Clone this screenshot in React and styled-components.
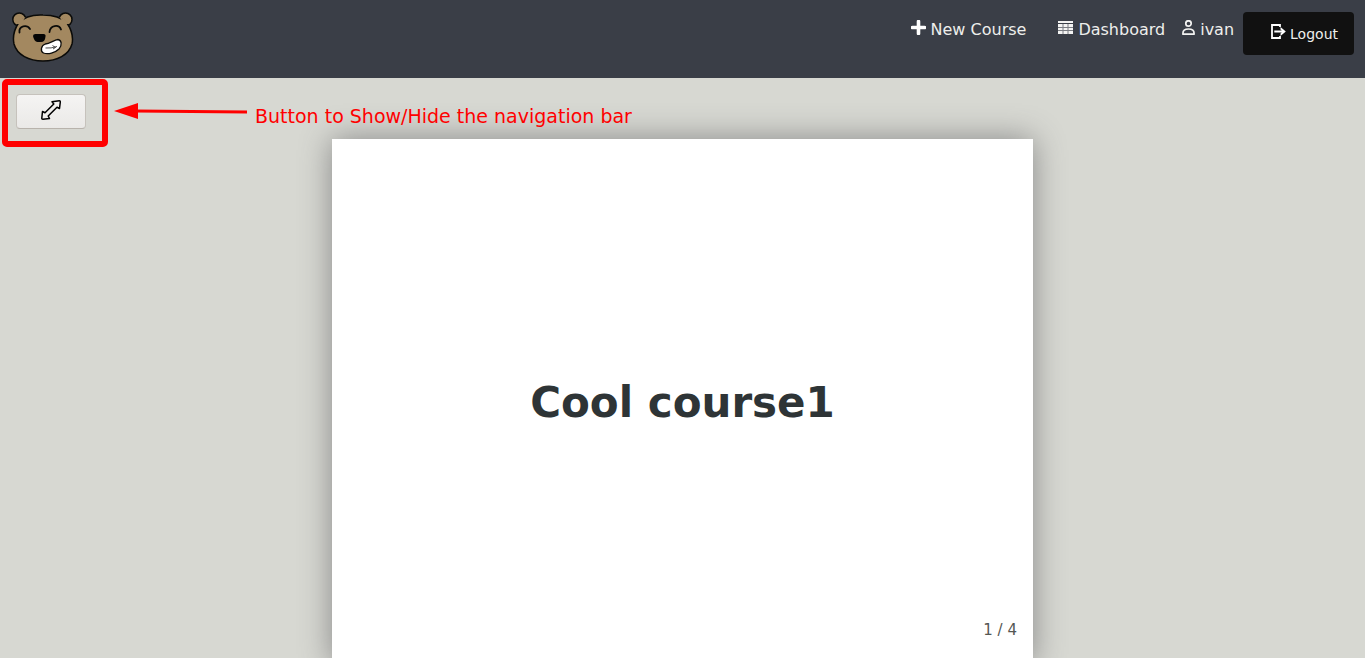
import React, { useState } from "react";
import styled, { createGlobalStyle } from "styled-components";

const GlobalStyle = createGlobalStyle`
  * { box-sizing: border-box; }
  body {
    margin: 0;
    height: 100vh;
    overflow: hidden;
    background: #d7d8d2;
    color: #2e3436;
    font-family: "DejaVu Sans", sans-serif;
    font-size: 16px;
  }
`;

const Header = styled.header`
  display: flex;
  justify-content: space-between;
  align-items: flex-start;
  min-height: 78px;
  padding: 12px 11px 12px 12px;
  background: #3a3e47;
`;

const HomeLink = styled.a`
  display: block;
  line-height: 0;
`;

const Nav = styled.nav`
  display: flex;
  align-items: flex-start;
`;

const NavLink = styled.a`
  display: flex;
  align-items: flex-start;
  gap: 5px;
  margin-right: ${(p) => p.$after}px;
  padding-top: 8px;
  line-height: 19px;
  color: #eeeeec;
  text-decoration: none;
`;

const LogoutButton = styled.button`
  display: flex;
  align-items: flex-start;
  gap: 4px;
  height: 43px;
  padding: 12px 16px 0 27px;
  border: 0;
  border-radius: 4px;
  background: #111111;
  color: #eeeeec;
  font: 14px/20px "DejaVu Sans", sans-serif;
`;

const Toolbar = styled.div`
  display: flex;
  align-items: flex-start;
  padding: 16px 16px 0;
`;

const Highlight = styled.div`
  position: relative;
  &::after {
    content: "";
    position: absolute;
    inset: -15px -22px -18px -14px;
    border: 6px solid #ff0000;
    border-radius: 5px;
    pointer-events: none;
  }
`;

const ToggleButton = styled.button`
  display: flex;
  align-items: center;
  justify-content: center;
  width: 70px;
  height: 35px;
  padding: 0 0 3px;
  border: 1px solid #c6c2bc;
  border-bottom-color: #b8b3ac;
  border-radius: 4px;
  background: linear-gradient(#f5f4f3, #eae9e7);
`;

const Note = styled.p`
  display: flex;
  align-items: flex-start;
  gap: 8px;
  margin: 0 0 0 28px;
  color: #ff0000;
  font-size: 19px;
  line-height: 45px;
`;

const Slide = styled.main`
  display: grid;
  grid-template-rows: 1fr auto 1fr;
  width: min(100%, 701px);
  aspect-ratio: 4 / 3;
  margin: 0 auto;
  padding: 0 16px 23px;
  background: #ffffff;
  box-shadow: 0 0 30px #888888;
`;

const Title = styled.h1`
  grid-row: 2;
  margin: 25px 0 0;
  font-size: 42px;
  line-height: 50px;
  text-align: center;
`;

const PageCount = styled.div`
  grid-row: 3;
  align-self: end;
  color: #555753;
  font-size: 15px;
  line-height: 24px;
  text-align: right;
`;

const BearLogo = () => (
  <svg width="62" height="50" viewBox="0 0 62 50" role="img" aria-label="Bear logo">
    <g fill="#a38860" stroke="#0b0b09" strokeWidth="1.500">
      <circle cx="7.300" cy="7.500" r="6.500" />
      <circle cx="53.500" cy="7.500" r="6.500" />
      <path d="M31 3C21 2.500 12 5 6.500 11C2 18 .5 25 2 32C5 43 17 49 31 49C45 49 57 43 60 32C61.500 25 59 17 55 11C49 5 41 3 31 3Z" />
    </g>
    <path d="M4 12Q7 7 13.500 5L9 12ZM57.500 12Q54 7 47.500 5L52 12Z" fill="#a38860" />
    <g fill="none" stroke="#0b0b09" strokeWidth="1.800" strokeLinecap="round">
      <path d="M7.500 20.500C6.500 13.500 15 12.500 18 17M37.500 20C38 13 47 12 49 17.500" />
    </g>
    <path d="M21 24Q21 22 23.500 22H31.500Q34 22 33.500 24.500Q33 30 29 30H25.500Q22 29.500 21 24Z" fill="#050505" />
    <path d="M33.300 32C38 31.500 42 28 46 27.500C49.500 28 50.500 33 47 37C43 41 36 42.500 31.500 41C28 39 29 33.500 33.300 32Z" fill="#fff" stroke="#0b0b09" strokeWidth="1.300" />
    <path d="M33.500 36Q39 36.500 45 34.500M40.500 33.500L43.500 35.500L41 37" fill="none" stroke="#222" strokeWidth=".8" />
  </svg>
);

const PlusIcon = () => (
  <svg width="15" height="15" viewBox="0 0 15 15" aria-hidden="true">
    <path d="M7.500 1.500V13.500M1.500 7.500H13.500" stroke="#fff" strokeWidth="3.600" strokeLinecap="round" />
  </svg>
);

const TableIcon = () => (
  <svg width="15" height="16" viewBox="0 0 15 16" aria-hidden="true">
    <path d="M0 1H15V3H0ZM0 4H15V14H0Z" fill="#7b7d83" />
    <path d="M0 1H15V3H0ZM0 4H4.500V7H0ZM5.500 4H9.500V7H5.500ZM10.500 4H15V7H10.500ZM0 8H4.500V10H0ZM5.500 8H9.500V10H5.500ZM10.500 8H15V10H10.500ZM0 11H4.500V14H0ZM5.500 11H9.500V14H5.500ZM10.500 11H15V14H10.500Z" fill="#f3f3f2" />
  </svg>
);

const UserIcon = () => (
  <svg width="13" height="16" viewBox="0 0 13 16" fill="none" stroke="#f3f3f2" strokeWidth="1.700" aria-hidden="true">
    <circle cx="6.500" cy="3.500" r="2.700" />
    <path d="M1 14.200C.5 10.500 3 9 6.500 9S12.500 10.500 12 14.200Z" />
  </svg>
);

const ExitIcon = () => (
  <svg width="16" height="16" viewBox="0 0 16 16" aria-hidden="true">
    <path d="M10 3V1H2V14H10V12M4.300 7.500H13" fill="none" stroke="#fff" strokeWidth="1.800" />
    <path d="M10.500 3L15.800 7.500L10.500 12V9.500L12.500 7.500L10.500 5.500Z" fill="#fff" />
  </svg>
);

const ResizeIcon = () => (
  <svg width="20" height="20" viewBox="0 0 20 20" fill="none" stroke="#000" strokeWidth="1.500" strokeLinejoin="round" aria-hidden="true">
    <path d="M11 1.800L18.300 .8Q19.300 .7 19.300 2L18.500 8.500L16 7.300L7.200 16L8.500 18.500L2 19.200Q.7 19.300 .8 18L1.500 11.500L4 12.700L12.800 4Z" />
  </svg>
);

const LongArrow = () => (
  <svg width="133" height="35" viewBox="0 0 133 35" aria-hidden="true">
    <path d="M22 17L133 18" stroke="#f00" strokeWidth="3" />
    <path d="M0 17L24 9V25Z" fill="#f00" />
  </svg>
);

export default function App() {
  const [navVisible, setNavVisible] = useState(true);
  return (
    <>
      <GlobalStyle />
      {navVisible && (
        <Header>
          <HomeLink href="#home"><BearLogo /></HomeLink>
          <Nav>
            <NavLink href="#new" $after={32}><PlusIcon />New Course</NavLink>
            <NavLink href="#dashboard" $after={17}><TableIcon />Dashboard</NavLink>
            <NavLink href="#profile" $after={9}><UserIcon />ivan</NavLink>
            <LogoutButton type="button"><ExitIcon />Logout</LogoutButton>
          </Nav>
        </Header>
      )}
      <Toolbar>
        <Highlight>
          <ToggleButton
            type="button"
            aria-label="Show or hide the navigation bar"
            onClick={() => setNavVisible((v) => !v)}
          >
            <ResizeIcon />
          </ToggleButton>
        </Highlight>
        <Note><LongArrow />Button to Show/Hide the navigation bar</Note>
      </Toolbar>
      <Slide>
        <Title>Cool course1</Title>
        <PageCount>1 / 4</PageCount>
      </Slide>
    </>
  );
}
